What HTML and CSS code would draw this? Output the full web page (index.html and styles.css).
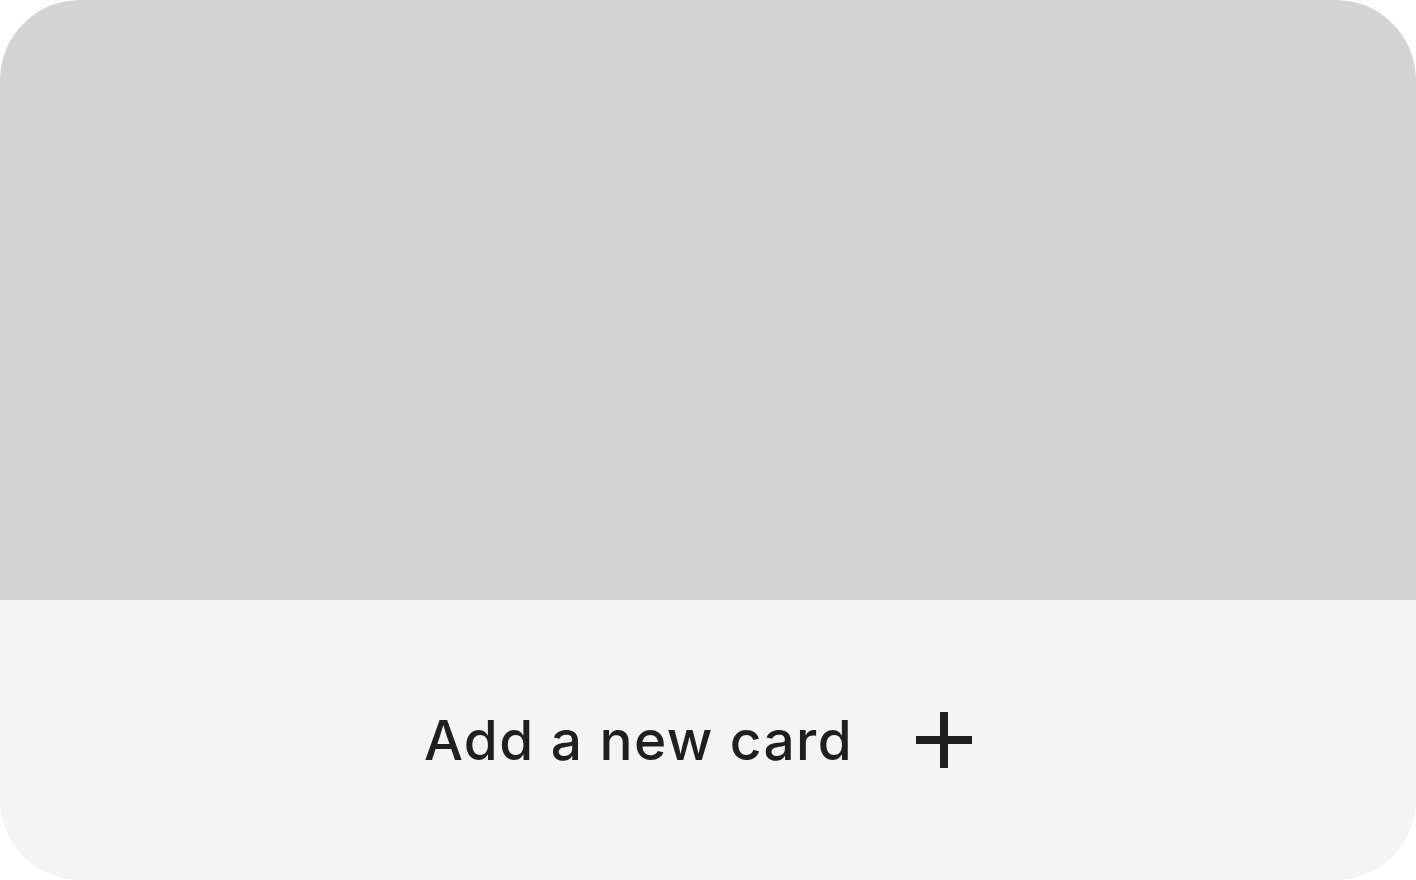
FILE: index.html
```html
<!DOCTYPE html>
<html lang="en">
<head>
<meta charset="utf-8">
<title>Add a new card</title>
<link rel="stylesheet" href="styles.css">
</head>
<body>
<div class="card">
  <div class="card-preview"></div>
  <div class="card-add">
    <span class="card-add-label">Add a new card</span>
    <svg class="card-add-icon" width="56" height="56" viewBox="0 0 56 56" aria-hidden="true">
      <rect x="24" y="0" width="8" height="56" fill="#1f1f1f"/>
      <rect x="0" y="24" width="56" height="8" fill="#1f1f1f"/>
    </svg>
  </div>
</div>
</body>
</html>
```
FILE: styles.css
```css
html, body {
  margin: 0;
  padding: 0;
  background: #ffffff;
}
.card {
  width: 1416px;
  height: 880px;
  border-radius: 80px;
  overflow: hidden;
  display: flex;
  flex-direction: column;
}
.card-preview {
  height: 600px;
  background: #d3d3d3;
}
.card-add {
  flex: 1;
  background: #f4f4f4;
  display: flex;
  align-items: center;
  justify-content: center;
  gap: 63px;
  padding-right: 20px;
}
.card-add-label {
  font-family: Inter, "Liberation Sans", sans-serif;
  font-size: 55px;
  font-weight: 500;
  color: #1f1f1f;
  letter-spacing: 1.4px;
  line-height: 1;
}
.card-add-icon {
  display: block;
  flex: none;
}
```
